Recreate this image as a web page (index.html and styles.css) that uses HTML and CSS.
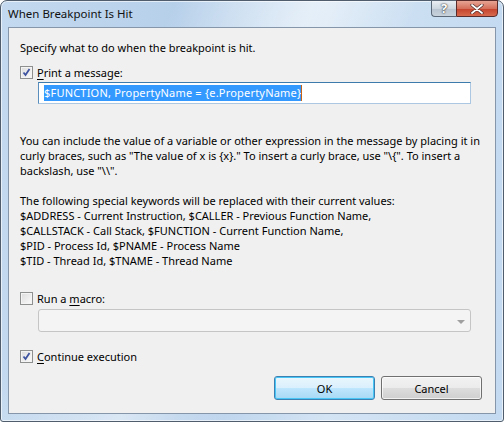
FILE: index.html
```html
<!DOCTYPE html>
<html>
<head>
  <meta charset="UTF-8">
  <title>When Breakpoint Is Hit</title>
  <link rel="stylesheet" href="styles.css">
</head>
<body>
  <div class="window">
    <div class="titlebar">
      <span class="title">When Breakpoint Is Hit</span>
      <div class="caption-buttons">
        <div class="btn-help">?</div>
        <div class="btn-close">
          <svg width="14" height="10" viewBox="0 0 14 10">
            <path d="M2 1 L12 9 M12 1 L2 9" stroke="#4a2a2a" stroke-width="3.2" stroke-linecap="round"/>
            <path d="M2 1 L12 9 M12 1 L2 9" stroke="#ffffff" stroke-width="1.8" stroke-linecap="round"/>
          </svg>
        </div>
      </div>
    </div>

    <div class="client">
      <p class="intro">Specify what to do when the breakpoint is hit.</p>

      <label class="check">
        <span class="box">
          <svg width="11" height="11" viewBox="0 0 11 11"><path d="M2.5 5.5 L4.5 8 L8.5 2" fill="none" stroke="#3f54a0" stroke-width="1.8"/></svg>
        </span>
        <span><u>P</u>rint a message:</span>
      </label>
      <div class="textbox"><span class="sel">$FUNCTION, PropertyName = {e.PropertyName}</span><span class="caret"></span></div>

      <p class="help first">You can include the value of a variable or other expression in the message by placing it in curly braces, such as "The value of x is {x}." To insert a curly brace, use "\{". To insert a backslash, use "\\".</p>

      <p class="help second">The following special keywords will be replaced with their current values:<br>
        $ADDRESS - Current Instruction, $CALLER - Previous Function Name,<br>
        $CALLSTACK - Call Stack, $FUNCTION - Current Function Name,<br>
        $PID - Process Id, $PNAME - Process Name<br>
        $TID - Thread Id, $TNAME - Thread Name</p>

      <label class="check macro">
        <span class="box"></span>
        <span>Run a <u>m</u>acro:</span>
      </label>
      <div class="combo"><span class="arrow"></span></div>

      <label class="check continue">
        <span class="box">
          <svg width="11" height="11" viewBox="0 0 11 11"><path d="M2.5 5.5 L4.5 8 L8.5 2" fill="none" stroke="#3f54a0" stroke-width="1.8"/></svg>
        </span>
        <span><u>C</u>ontinue execution</span>
      </label>

      <div class="buttons">
        <button class="default">OK</button>
        <button>Cancel</button>
      </div>
    </div>
  </div>
</body>
</html>
```

FILE: styles.css
```css
body {
  margin: 0;
  font-family: "Noto Sans", "Open Sans", sans-serif;
  font-size: 11px;
  color: #000;
  background: #fff;
}
.window {
  width: 504px;
  height: 422px;
  box-sizing: border-box;
  border: 1px solid #4f5d6c;
  border-radius: 7px 7px 3px 3px;
  background:
    linear-gradient(115deg, rgba(255,255,255,0) 25%, rgba(255,255,255,0.45) 45%, rgba(255,255,255,0) 60%),
    linear-gradient(to right, #c3d9ef, #b7d0ea 35%, #d3e4f4 65%, #c4daf0);
  box-shadow: inset 0 0 0 1px rgba(255,255,255,0.6);
}
.titlebar {
  height: 26px;
  display: flex;
  justify-content: space-between;
  align-items: flex-start;
  padding-left: 7px;
  padding-right: 5px;
}
.title {
  margin-top: 5px;
  line-height: 16px;
  font-size: 11.5px;
  color: #111;
}
.caption-buttons {
  display: flex;
  margin-top: -1px;
}
.btn-help {
  width: 25px;
  height: 17px;
  box-sizing: border-box;
  border: 1px solid #5a6878;
  border-right: none;
  border-radius: 0 0 0 4px;
  background: linear-gradient(to bottom, #e9eef3, #cdd6df 50%, #b7c3cf 51%, #c7d2dc);
  color: #fff;
  text-align: center;
  font-size: 13px;
  line-height: 15px;
  font-weight: bold;
  text-shadow: 0 0 2px #333, 0 0 1px #333;
}
.btn-close {
  width: 42px;
  height: 17px;
  box-sizing: border-box;
  border: 1px solid #5a2b2b;
  border-radius: 0 0 4px 0;
  background: linear-gradient(to bottom, #e8a494, #d4705b 50%, #c4412b 51%, #d66a4e);
  display: flex;
  align-items: center;
  justify-content: center;
}
.client {
  margin: 0 7px;
  height: 387px;
  box-sizing: border-box;
  border: 1px solid #8596aa;
  background: #f0f0f0;
  padding: 12px 12px 0 11px;
}
p {
  margin: 0;
  line-height: 15px;
}
.check {
  display: flex;
  align-items: center;
  height: 15px;
  margin-top: 10px;
}
.check u {
  text-decoration-thickness: 1px;
  text-underline-offset: 2px;
}
.box {
  width: 13px;
  height: 13px;
  box-sizing: border-box;
  border: 1px solid #8e8f8f;
  background: linear-gradient(135deg, #dcdcdc, #fbfbfb);
  box-shadow: inset 0 0 0 1px #f4f4f4;
  margin-right: 4px;
  display: flex;
  align-items: center;
  justify-content: center;
}
.textbox {
  margin: 2px 12px 0 18px;
  height: 22px;
  box-sizing: border-box;
  border: 1px solid #abc7e2;
  border-top-color: #3d7bad;
  border-left-color: #5a8fbd;
  background: #fff;
  display: flex;
  align-items: center;
  padding-left: 5px;
}
.sel {
  background: #3399ff;
  color: #fff;
  line-height: 16px;
  letter-spacing: 0.2px;
}
.caret {
  width: 1px;
  height: 16px;
  background: #c86414;
}
.help.first {
  margin-top: 29px;
}
.help.second {
  margin-top: 15px;
}
.check.macro {
  margin-top: 23px;
}
.combo {
  margin: 3px 12px 0 18px;
  height: 23px;
  box-sizing: border-box;
  border: 1px solid #c5c5c5;
  border-radius: 3px;
  background: #f4f4f4;
  display: flex;
  justify-content: flex-end;
  align-items: center;
  padding-right: 5px;
}
.arrow {
  width: 0;
  height: 0;
  border-left: 4px solid transparent;
  border-right: 4px solid transparent;
  border-top: 4px solid #a0a0a0;
  margin-top: 2px;
}
.check.continue {
  margin-top: 17px;
}
.buttons {
  display: flex;
  justify-content: flex-end;
  gap: 6px;
  margin-top: 12px;
  padding-right: 1px;
}
button {
  width: 101px;
  height: 24px;
  font-family: inherit;
  font-size: 11px;
  color: #000;
  border: 1px solid #707070;
  border-radius: 3px;
  background: linear-gradient(to bottom, #f2f2f2, #ebebeb 50%, #dddddd 51%, #cfcfcf);
  box-shadow: inset 0 0 0 1px rgba(255,255,255,0.7);
  padding: 0;
}
button.default {
  border-color: #3c7fb1;
  background: linear-gradient(to bottom, #eaf6fd, #d9f0fc 50%, #bee6fd 51%, #a7d9f5);
  box-shadow: inset 0 0 0 1px #48c6f6;
}
```
